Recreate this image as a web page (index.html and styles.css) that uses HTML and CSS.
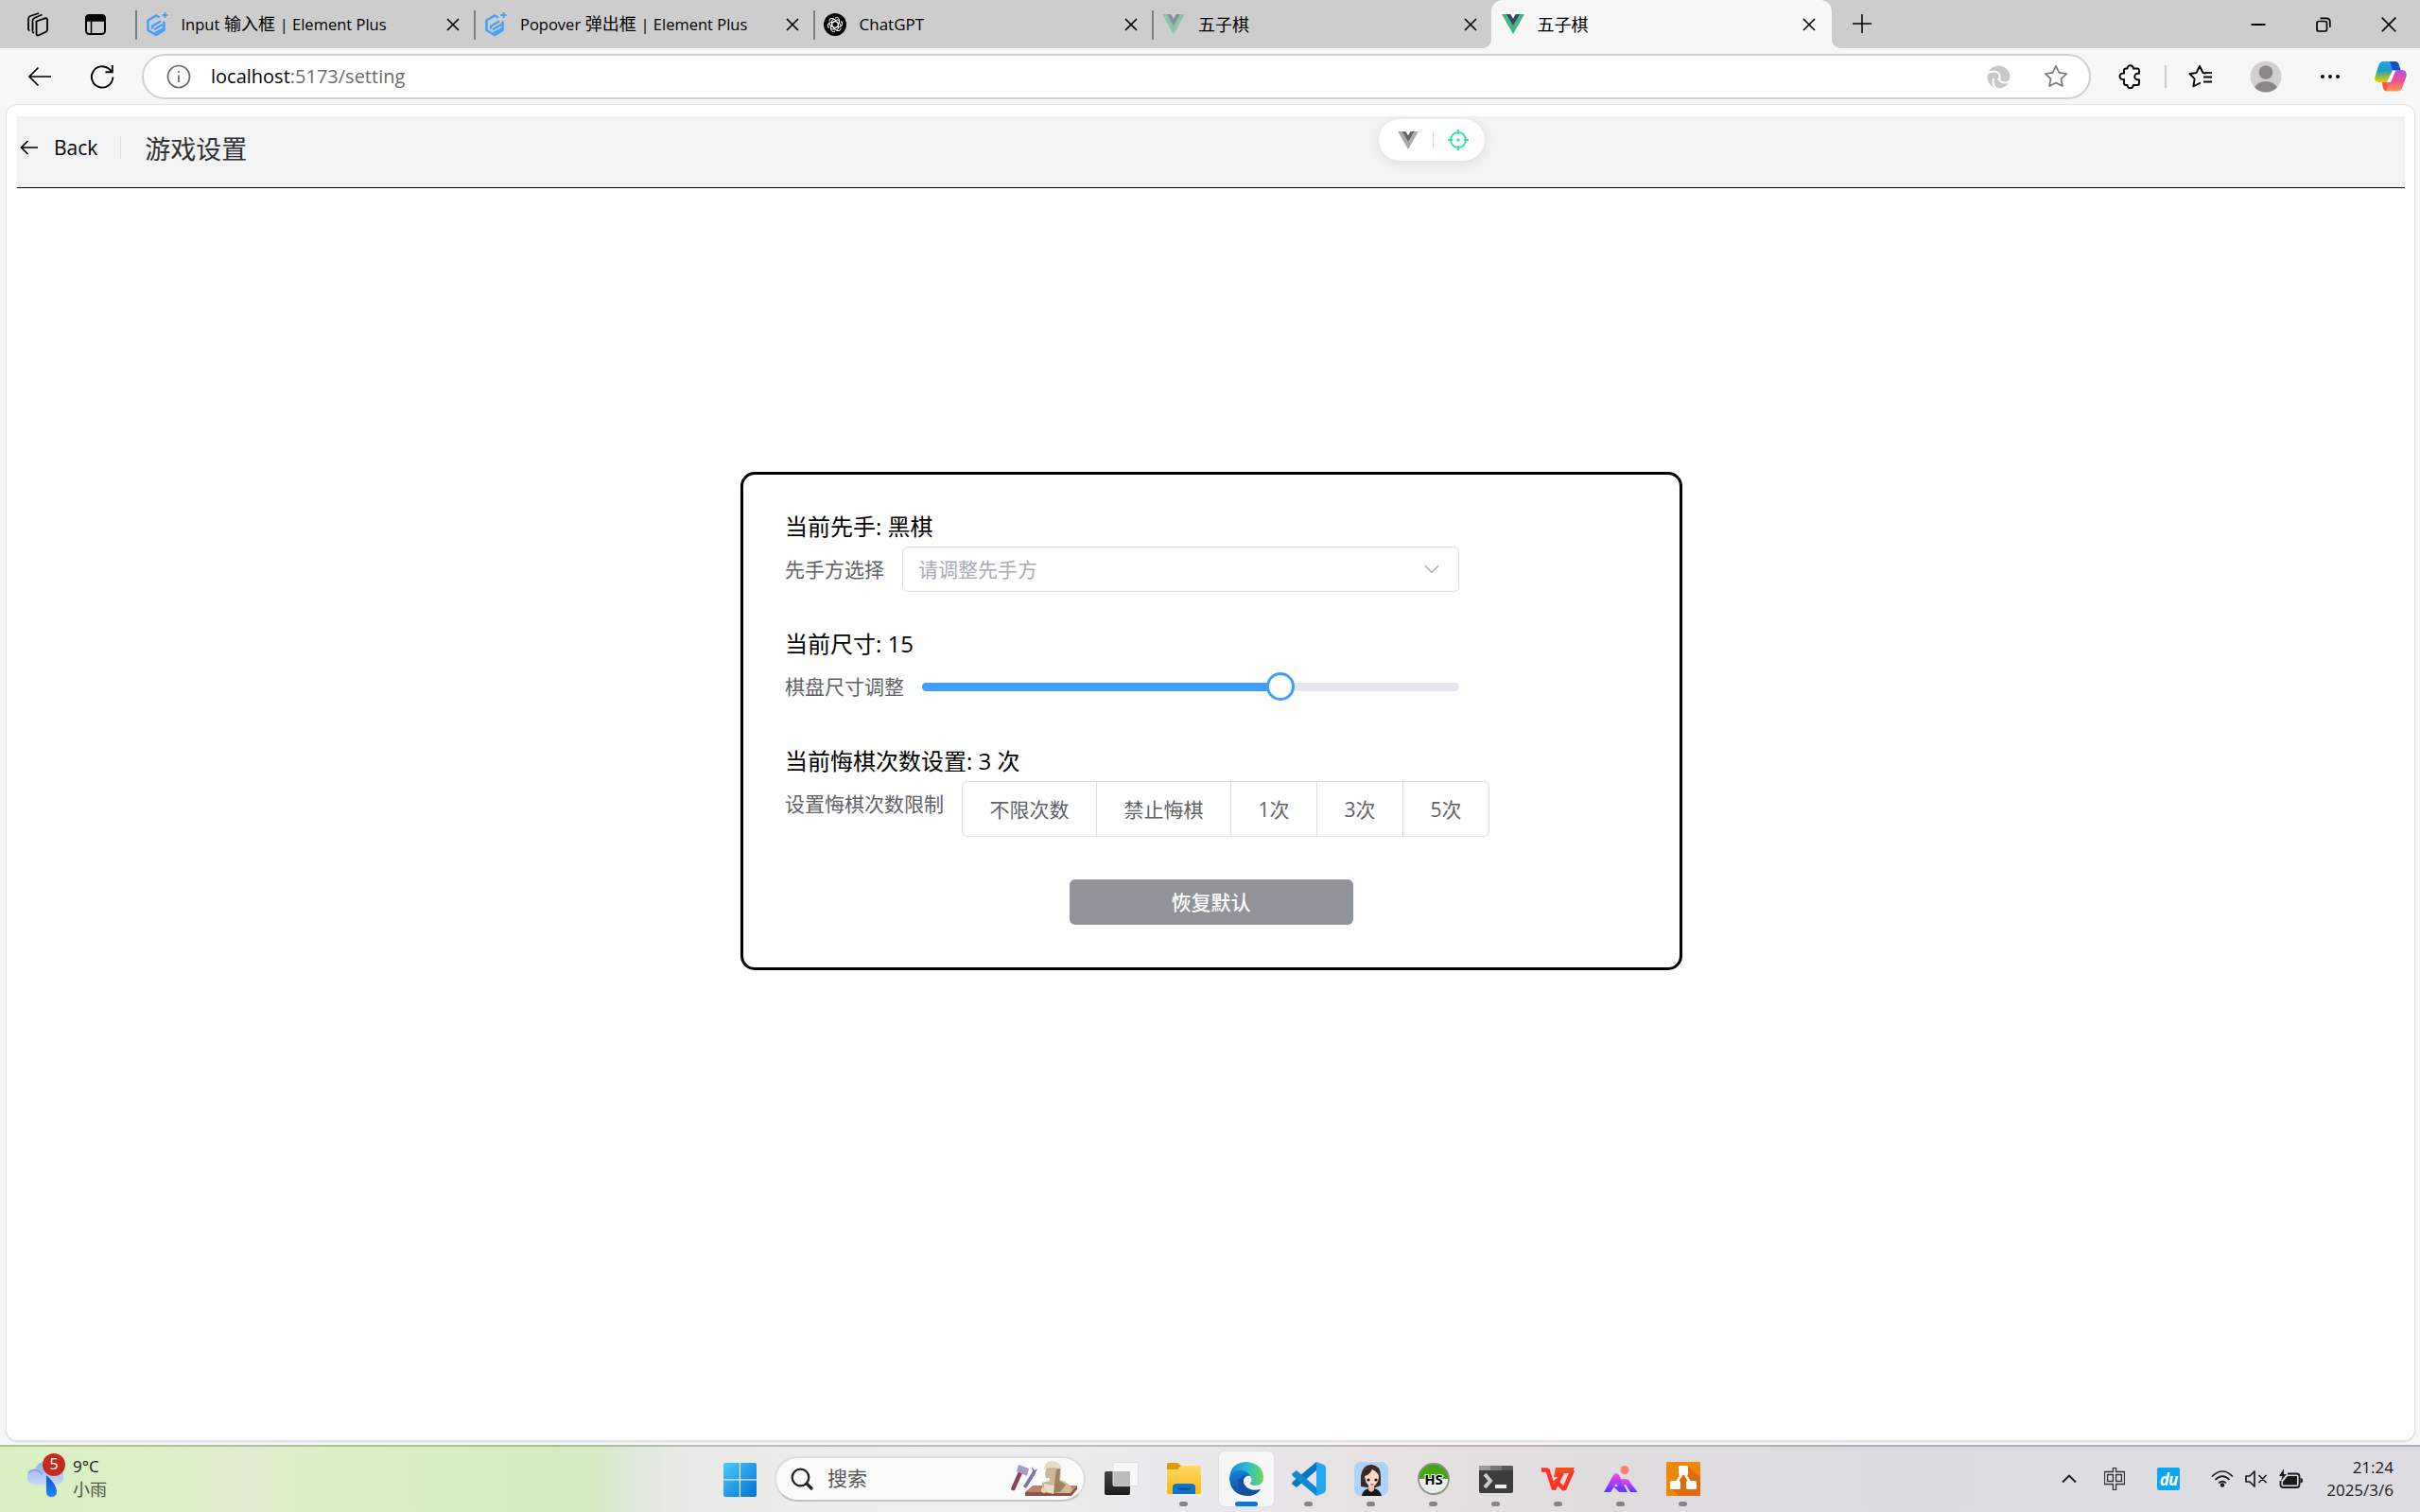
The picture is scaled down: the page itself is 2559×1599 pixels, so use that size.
FILE: index.html
```html
<!DOCTYPE html>
<html lang="zh-CN">
<head>
<meta charset="utf-8">
<title>五子棋</title>
<link rel="stylesheet" href="styles.css">
</head>
<body>
<svg width="0" height="0" class="defs">
  <defs>
    <symbol id="close" viewBox="0 0 14 14"><path d="M1 1l12 12M13 1L1 13" fill="none" stroke="#000" stroke-width="1.7"/></symbol>
    <symbol id="element" viewBox="0 0 24 26"><g fill="none" stroke="#409eff" stroke-width="2.4" stroke-linejoin="round"><path d="M15 5.500L11 3.500 2.500 8.500v10.500l8.500 5 8.500-5V9.500"/></g><g fill="none" stroke="#409eff" stroke-width="2.200"><path d="M16 9.500l-9 5.200v2.800M18 13l-9 5.200M18.500 17.500L10 22"/></g><path d="M20.500 0v6M17.500 3h6" stroke="#409eff" stroke-width="1.8"/></symbol>
    <symbol id="vue" viewBox="0 0 24 21"><path fill="#41b883" d="M0 0h4.800L12 12.400 19.200 0H24L12 21z"/><path fill="#35495e" d="M4.800 0h4.500L12 4.700 14.700 0h4.500L12 12.400z"/></symbol>
    <symbol id="vuegray" viewBox="0 0 24 21"><path fill="#aaa" d="M0 0h4.800L12 12.400 19.200 0H24L12 21z"/><path fill="#646464" d="M4.800 0h4.500L12 4.700 14.700 0h4.500L12 12.400z"/></symbol>
    <linearGradient id="gwin" x1="0" y1="0" x2="1" y2="1"><stop offset="0" stop-color="#4ccbff"/><stop offset="1" stop-color="#0070cf"/></linearGradient>
    <linearGradient id="gedge" x1="0" y1="0" x2="1" y2="0"><stop offset="0" stop-color="#1b86cf"/><stop offset=".5" stop-color="#2bbbd4"/><stop offset="1" stop-color="#6ad955"/></linearGradient>
    <linearGradient id="gedge2" x1="0" y1="0" x2="0" y2="1"><stop offset="0" stop-color="#1580d3"/><stop offset="1" stop-color="#0f4c9c"/></linearGradient>
    <linearGradient id="gfold" x1="0" y1="0" x2="0" y2="1"><stop offset="0" stop-color="#ffd866"/><stop offset="1" stop-color="#fbb914"/></linearGradient>
    <linearGradient id="gai" x1="0" y1="0" x2="0" y2="1"><stop offset="0" stop-color="#f04fd6"/><stop offset=".6" stop-color="#9a3cff"/><stop offset="1" stop-color="#4b3bff"/></linearGradient>
    <linearGradient id="gcloud" x1="0" y1="0" x2="0" y2="1"><stop offset="0" stop-color="#8eb0f0"/><stop offset="1" stop-color="#c9d9f8"/></linearGradient>
    <linearGradient id="gdrop" x1="0" y1="0" x2="0" y2="1"><stop offset="0" stop-color="#0d53dc"/><stop offset="1" stop-color="#1d85ff"/></linearGradient>
    <linearGradient id="gcop1" x1="0" y1="0" x2="0" y2="1"><stop offset="0" stop-color="#1aa5ee"/><stop offset=".45" stop-color="#2a9bc5"/><stop offset=".75" stop-color="#8cc63f"/><stop offset="1" stop-color="#ffc800"/></linearGradient>
    <linearGradient id="gcop2" x1="0" y1="0" x2="0" y2="1"><stop offset="0" stop-color="#a855ee"/><stop offset=".5" stop-color="#ee4f93"/><stop offset="1" stop-color="#ff9a4a"/></linearGradient>
    <linearGradient id="gtv" x1="0" y1="0" x2="0" y2="1"><stop offset="0" stop-color="#444"/><stop offset="1" stop-color="#1c1c1c"/></linearGradient>
  </defs>
</svg>

<div class="window">
  <div class="tabstrip">
    <div class="strip-tools">
      <svg width="26" height="26" viewBox="0 0 26 26" fill="none" stroke="#000" stroke-width="1.800" stroke-linejoin="round"><path d="M12.500 9.500l9-3.200q2.500-.6 2.500 1.700v10.500q0 1.500-1.500 2.200l-7.500 3.500q-2.500 1-2.500-1.500z"/><path d="M8.500 20V9q0-2 2-3l8-3.500M4 17.500V7q0-2 2-3l9-3M8.500 20q0 1.500 1.500 2M4 17.500q0 1.500 1.500 2"/></svg>
      <svg width="22" height="22" viewBox="0 0 22 22"><rect x="1" y="1" width="20" height="20" rx="3.500" fill="none" stroke="#000" stroke-width="2"/><path d="M1 7V4q0-3 3-3h14q3 0 3 3v3zM6.500 7v14" stroke="#000" stroke-width="1.500"/></svg>
    </div>
    <div class="tab"><svg class="fav" width="24" height="26"><use href="#element"/></svg><span class="title"><span class="lat">Input</span> 输入框 <span class="lat">| Element Plus</span></span><svg class="x" width="14" height="14"><use href="#close"/></svg></div>
    <div class="tab"><svg class="fav" width="24" height="26"><use href="#element"/></svg><span class="title"><span class="lat">Popover</span> 弹出框 <span class="lat">| Element Plus</span></span><svg class="x" width="14" height="14"><use href="#close"/></svg></div>
    <div class="tab"><svg class="fav" width="24" height="24" viewBox="0 0 24 24"><circle cx="12" cy="12" r="12"/><g fill="none" stroke="#fff" stroke-width="1"><g id="petal"><path d="M12 8.500l3.500 2V15q0 2.500-2.500 3"/><path d="M12 5q3.500-1.500 4.500 2v3.500"/></g><use href="#petal" transform="rotate(60 12 12)"/><use href="#petal" transform="rotate(120 12 12)"/><use href="#petal" transform="rotate(180 12 12)"/><use href="#petal" transform="rotate(240 12 12)"/><use href="#petal" transform="rotate(300 12 12)"/></g></svg><span class="title"><span class="lat gpt">ChatGPT</span></span><svg class="x" width="14" height="14"><use href="#close"/></svg></div>
    <div class="tab"><svg class="fav faded" width="24" height="21"><use href="#vue"/></svg><span class="title">五子棋</span><svg class="x" width="14" height="14"><use href="#close"/></svg></div>
    <div class="tab active"><svg class="fav" width="24" height="21"><use href="#vue"/></svg><span class="title">五子棋</span><svg class="x" width="14" height="14"><use href="#close"/></svg></div>
    <svg class="newtab" width="20" height="20" viewBox="0 0 20 20"><path d="M10 0v20M0 10h20" stroke="#000" stroke-width="1.500"/></svg>
    <div class="winbtns">
      <svg width="16" height="16" viewBox="0 0 16 16"><path d="M.5 8h15" stroke="#000" stroke-width="2"/></svg>
      <svg width="16" height="16" viewBox="0 0 16 16" fill="none" stroke="#000" stroke-width="1.700"><rect x="1" y="4.500" width="10.500" height="10.500" rx="2"/><path d="M4.500 1.300H11q3.800 0 3.800 3.800V11"/></svg>
      <svg width="16" height="16" viewBox="0 0 16 16"><path d="M.7.700l14.600 14.600M15.300.700L.7 15.300" stroke="#000" stroke-width="1.700"/></svg>
    </div>
  </div>

  <div class="toolbar">
    <div class="nav">
      <svg width="26" height="22" viewBox="0 0 26 22" fill="none" stroke="#000" stroke-width="1.700"><path d="M25 11H2M11.500 1.500L2 11l9.500 9.500"/></svg>
      <svg width="26" height="26" viewBox="0 0 26 26" fill="none" stroke="#000" stroke-width="1.900"><path d="M24.300 13.500A11.200 11.200 0 1 1 20.500 5l3 3M23.800 1v7.300h-7.300"/></svg>
    </div>
    <div class="address">
      <svg width="26" height="26" viewBox="0 0 26 26" fill="none" stroke="#666" stroke-width="1.700"><circle cx="13" cy="13" r="11.500"/><path d="M13 11.500V19M13 7v2"/></svg>
      <span class="url">localhost<span class="path">:5173/setting</span></span>
      <svg class="read" width="25" height="25" viewBox="0 0 25 25"><circle cx="12.500" cy="12.500" r="12" fill="#c8c8c8"/><path d="M0 9Q7 4.500 12 8q4 4-.5 7.500M12 26q-7-4-5-12M26 14q-4 6-10 4-3.500-2-2.500-6" fill="none" stroke="#fff" stroke-width="2"/></svg>
      <svg width="26" height="26" viewBox="0 0 26 26" fill="none" stroke="#767676" stroke-width="1.700" stroke-linejoin="round"><path d="M13 1.800l3.400 7.100 7.800 1.100-5.700 5.400 1.400 7.700-6.900-3.700-6.900 3.700 1.400-7.700L1.800 10l7.800-1.100z"/></svg>
    </div>
    <div class="tools">
      <svg width="26" height="26" viewBox="0 0 26 26" fill="none" stroke="#000" stroke-width="1.900" stroke-linejoin="round"><path d="M9.500 4.500a3.200 3.200 0 0 1 6.400 0H20q2 0 2 2v3.200h-1.500a3.300 3.300 0 0 0 0 6.600H22V20q0 2-2 2h-4.100a3.200 3.200 0 0 1-6.400 0H8q-2 0-2-2v-4H4.700a3.200 3.200 0 0 1 0-6.400H6V6.500q0-2 2-2z"/></svg>
      <i class="tooldiv"></i>
      <svg width="26" height="26" viewBox="0 0 26 26" fill="none" stroke="#000" stroke-width="1.900" stroke-linejoin="round"><path d="M18.500 9.500l-3-.5L12 1.800 8.600 9 1.500 10l5.200 5.300-1.400 8L13 19.500M16 13.500h9M16 8.500M16 18.500h9"/><path d="M18 9h7" stroke-width="1.700"/></svg>
      <svg width="34" height="34" viewBox="0 0 34 34"><circle cx="17" cy="17" r="16.500" fill="#d2d0ce"/><circle cx="17" cy="12.500" r="7.300" fill="#8a8886"/><path d="M5 28.300Q9 22 17 22t12 6.300Q24 33.500 17 33.500t-12-5.200z" fill="#8a8886"/></svg>
      <svg width="22" height="6" viewBox="0 0 22 6"><circle cx="3" cy="3" r="2"/><circle cx="11" cy="3" r="2"/><circle cx="19" cy="3" r="2"/></svg>
      <svg width="34" height="32" viewBox="0 0 34 32"><path d="M9 0h13l-7 22H5Q-1 22 .5 16L4 5Q5.500 0 9 0z" fill="url(#gcop1)"/><path d="M16 0h6q3 0 4 4l1.500 5H19z" fill="#1750c8"/><path d="M25 9h4q6 1 4.500 7L30 26q-1.500 5.500-6 5.500H12L18.500 9z" fill="url(#gcop2)"/><path d="M8 22h7l-2.500 9.500q-3-.5-4-5z" fill="#f25a3c"/><path d="M19 9.500h3.500L17 22h-4z" fill="#fff"/></svg>
    </div>
  </div>

  <main class="page">
    <header class="page-header">
      <svg width="20" height="16" viewBox="0 0 20 16" fill="none" stroke="#000" stroke-width="1.700"><path d="M19 8H1.500M8.500 1l-7 7 7 7"/></svg>
      <span class="back">Back</span>
      <i class="vdiv"></i>
      <span class="ptitle">游戏设置</span>
    </header>
    <div class="devtools">
      <svg width="22" height="19"><use href="#vuegray"/></svg>
      <i></i>
      <svg width="22" height="22" viewBox="0 0 22 22" fill="none" stroke="#31e6a0" stroke-width="2"><circle cx="11" cy="11" r="8"/><path d="M11 0v5M11 17v5M0 11h5M17 11h5"/><circle cx="11" cy="11" r="1.700" fill="#31e6a0" stroke="none"/></svg>
    </div>
    <section class="card">
      <h2>当前先手: 黑棋</h2>
      <div class="row">
        <label>先手方选择</label>
        <div class="select"><span>请调整先手方</span><svg width="16" height="10" viewBox="0 0 16 10"><path d="M.7 1L8 8.300 15.300 1" fill="none" stroke="#a8abb2" stroke-width="1.300"/></svg></div>
      </div>
      <h2>当前尺寸: 15</h2>
      <div class="row">
        <label>棋盘尺寸调整</label>
        <div class="slider"><div class="bar" style="width:66.67%"></div><div class="knob" style="left:66.67%"></div></div>
      </div>
      <h2>当前悔棋次数设置: 3 次</h2>
      <div class="row last">
        <label>设置悔棋次数限制</label>
        <div class="group"><span class="wide">不限次数</span><span class="wide">禁止悔棋</span><span>1次</span><span>3次</span><span>5次</span></div>
      </div>
      <div class="reset">恢复默认</div>
    </section>
  </main>
</div>

<footer class="taskbar">
  <div class="weather">
    <div class="wicon">
      <svg width="38" height="48" viewBox="0 0 38 48"><path d="M8.500 34.500h21a8.500 8.500 0 0 0 1-17A12 12 0 0 0 8 17.500a8.500 8.500 0 0 0 .5 17z" fill="url(#gcloud)"/><path d="M1 22a8.500 8.500 0 0 1 14.500 1.500" fill="none" stroke="#7d9de6" stroke-width="1.500"/><path d="M20 24q11 10 11 17 0 6-5.500 6T20 41z" fill="url(#gdrop)"/></svg>
      <b>5</b>
    </div>
    <div class="wtext"><span class="deg">9°C</span><span class="cond">小雨</span></div>
  </div>
  <div class="apps">
    <svg class="start" width="35" height="36" viewBox="0 0 35 36"><path d="M2 0h14.800v17.300H0V2q0-2 2-2zM18 0h15q2 0 2 2v15.300H18zM0 18.600h16.800V36H2q-2 0-2-2zM18 18.600h17V34q0 2-2 2H18z" fill="url(#gwin)"/></svg>
    <div class="search">
      <svg width="24" height="24" viewBox="0 0 24 24" fill="none" stroke="#222" stroke-linecap="round"><circle cx="10.500" cy="10.500" r="8.800" stroke-width="2.300"/><path d="M17 17l5 5" stroke-width="3.200"/></svg>
      <span>搜索</span>
      <svg class="art" width="70" height="38" viewBox="0 0 70 38"><path d="M23 26h47l-7 7H15z" fill="#bf8269"/><path d="M15 33h48l7-7v4l-6 7H15z" fill="#8e5544"/><path d="M0 29L9 9l4 2L4 31q-4 1-4-2z" fill="#89405e"/><path d="M8 4l11 4-2 8L6 11z" fill="#a79bc6"/><path d="M13 27L23 11l-1-5 3 4 3-2-3 7-9 14z" fill="#7875a8"/><path d="M37 10q-1-8 6-9 8-1 10 6l-1 13q8 2 13 10 0 4-4 4H40l-7-2V23l8-2v-3h-4l-1-4z" fill="#cbb696"/><path d="M35 9q0-8 8-9 7 0 10 6v3q-9-4-18 0z" fill="#e5dac5"/><path d="M48 9l4-1-1 13 7 4-6 8-10 1 4-9z" fill="#9b8160"/><path d="M35 24l11 2-1 9-10-3z" fill="#eadfcb"/><circle cx="35" cy="31" r="3" fill="#e5d3b2"/><circle cx="60" cy="30" r="4" fill="#d4bc95"/></svg>
    </div>
    <div class="app"><svg width="36" height="36" viewBox="0 0 36 36"><rect y="10" width="27" height="25" rx="2" fill="url(#gtv)"/><rect x="9" y=".5" width="26.500" height="25" rx="1.500" fill="#f8f8f8" stroke="#ddd"/><path d="M9.500 10H27v15.500H9.500z" fill="#bcbcbc"/></svg></div>
    <div class="app run"><svg width="36" height="36" viewBox="0 0 36 36"><path d="M0 3q0-2 2-2h9l4 3v6H0z" fill="#dc9c00"/><path d="M0 8h11l4-4h19q2 0 2 2v26q0 2-2 2H2q-2 0-2-2z" fill="url(#gfold)"/><path d="M6 34V27q0-4 4-4h16q4 0 4 4v7z" fill="#0a75cd"/><path d="M11 28.500h14" stroke="#0c4a94" stroke-width="2"/></svg></div>
    <div class="app run current"><svg width="36" height="36" viewBox="0 0 36 36"><path d="M0 18Q1 0 19 0q16 2 17 16 0 9-9 9-6 0-5-3 3-3 0-7-6-7-15-3-6 2-7 6z" fill="url(#gedge)"/><path d="M0 17Q4 8 13 9q7 1 9 6-4-1-7 3-4 8 5 13 6 2 13-2-5 7-14 7Q1 35 0 17z" fill="url(#gedge2)"/><path d="M11 18q3-4 7-4-5 5-2 10 5 8 17 5-5 7-14 7-11-3-10-18z" fill="#124f9f"/></svg></div>
    <div class="app run"><svg width="36" height="36" viewBox="0 0 36 36"><path d="M26 0v9L5 27l-4-3q-2-1 0-3z" fill="#0077c2"/><path d="M26 36v-9L5 9l-4 3q-2 1 0 3z" fill="#1389d4"/><path d="M26 0l8 3q2 1 2 3v24q0 2-2 3l-8 3z" fill="#25a5f3"/></svg></div>
    <div class="app run"><svg width="36" height="36" viewBox="0 0 36 36"><rect width="36" height="36" rx="7" fill="#add3fa"/><path d="M7 26V15Q9 2 19 3q9 1 9 12v10l-8 3z" fill="#392b28"/><path d="M8 36q1-7 8-8h5q6 1 8 8z" fill="#171719"/><path d="M15 25h6v5l-3 2-3-2z" fill="#e9bda9"/><path d="M11 15q5-1 8-7 6 3 7 7 0 8-7 12-7-2-8-12z" fill="#fad9ca"/><circle cx="15" cy="19" r="1.600" fill="#231815"/><circle cx="23" cy="19" r="1.600" fill="#231815"/><path d="M17.500 24h3" stroke="#c75455" stroke-width="1.500"/></svg></div>
    <div class="app run"><svg width="36" height="36" viewBox="0 0 36 36"><circle cx="18" cy="18" r="16" fill="#ecefeb"/><path d="M2 18a16 16 0 0 1 32 0z" fill="#43a612"/><circle cx="18" cy="18" r="16" fill="none" stroke="#84947c" stroke-width="1.800"/><text x="18" y="23.500" text-anchor="middle" font-family="Open Sans,sans-serif" font-weight="700" font-size="15" stroke="#fff" stroke-width="2" paint-order="stroke">HS</text></svg></div>
    <div class="app run"><svg width="36" height="36" viewBox="0 0 36 36"><rect y="4" width="36" height="29" rx="2" fill="#3d3d3d"/><path d="M0 9V6q0-2 2-2h10v5z" fill="#999"/><path d="M12 4h12v5H12z" fill="#777"/><path d="M24 4h10q2 0 2 2v3H24z" fill="#595959"/><path d="M6 13l6 7-6 7" fill="none" stroke="#ccc" stroke-width="4"/><path d="M17 24h12v4H17z" fill="#eee"/></svg></div>
    <div class="app run"><svg width="36" height="36" viewBox="0 0 36 36"><g fill="none" stroke="#fb3527" stroke-width="4.500" stroke-linejoin="bevel"><path d="M0 8.500h6.500L13 29l9-18"/><path d="M14 19l10 10L33 8.500"/></g><path d="M15 6h20l-3 6H20l-2 4h-5z" fill="#f84a1c"/></svg></div>
    <div class="app run"><svg width="36" height="36" viewBox="0 0 36 36"><path d="M0 32L10 14q3-4 6 0l9 18h-7l-5-9-6 9z" fill="url(#gai)"/><path d="M10 26h8l5 6h-7z" fill="#713cf9"/><path d="M17 19q3-2 9 0l9.500 13H28l-5-8h-4z" fill="url(#gai)"/><circle cx="22" cy="8.500" r="4.500" fill="#fb8073"/></svg></div>
    <div class="app run"><svg width="36" height="36" viewBox="0 0 36 36"><rect width="36" height="36" rx="1.500" fill="#f08705"/><path d="M22 4l14 12v20H13l-8-8 12-12z" fill="#df6c0c"/><path d="M18 10L9 25M18 10l9 15" stroke="#fff" stroke-width="2.500"/><g fill="#fff"><rect x="13" y="4" width="10" height="10" rx="1.500"/><rect x="4" y="20" width="11" height="9" rx="1.500"/><rect x="21" y="20" width="11" height="9" rx="1.500"/></g></svg></div>
  </div>
  <div class="tray">
    <svg width="16" height="10" viewBox="0 0 16 10"><path d="M1 8.500l7-7 7 7" fill="none" stroke="#1a1a1a" stroke-width="1.900"/></svg>
    <svg width="22" height="24" viewBox="0 0 22 24" fill="none"><path d="M2 6h18v10H2zM11 0v24" stroke="#333" stroke-width="4.500"/><path d="M2 6h18v10H2zM11 1v22" stroke="#e9e9ec" stroke-width="1.700"/></svg>
    <span class="du">du</span>
    <svg width="24" height="18" viewBox="0 0 24 18" fill="none" stroke="#1a1a1a" stroke-width="1.700"><path d="M1 6.500q11-11 22 0M4.500 10q7.500-7.500 15 0M8 13.500q4-4 8 0"/><circle cx="12" cy="15.500" r="1.400" fill="#1a1a1a"/></svg>
    <svg width="24" height="18" viewBox="0 0 24 18" fill="none" stroke="#1a1a1a" stroke-width="1.700"><path d="M1 6h4l5-5v16l-5-5H1zM14.500 5l8 8M22.500 5l-8 8" stroke-linejoin="round"/></svg>
    <svg width="25" height="20" viewBox="0 0 25 20"><path d="M9 4.500h9.500q3 0 3 3V16q0 3-3 3h-14q-3 0-3-3v-4" fill="none" stroke="#1a1a1a" stroke-width="1.800"/><path d="M9 7h10v9.500H4V13z" fill="#1a1a1a"/><path d="M22.500 9q2.500 0 2.500 2.700t-2.500 2.700zM5 0h-.500L0 7h3.500L2 12l6-7H5z" fill="#1a1a1a"/></svg>
    <div class="clock"><span>21:24</span><span>2025/3/6</span></div>
  </div>
</footer>
</body>
</html>
```
FILE: styles.css
```css
* { box-sizing: border-box; }
body { margin: 0; width: 2559px; height: 1599px; overflow: hidden; display: flex; flex-direction: column; background: #f7f7f7; font-family: "Open Sans", "Noto Sans CJK SC", sans-serif; color: #000; }
svg { display: block; flex: none; }
.defs { position: absolute; }
.window { height: 1528px; display: flex; flex-direction: column; }

/* browser tabs */
.tabstrip { height: 51px; flex: none; background: #cdcdcd; display: flex; }
.strip-tools { width: 142.500px; display: flex; align-items: center; gap: 38px; padding-left: 26px; }
.tab { width: 358.500px; height: 51px; display: flex; align-items: center; padding: 0 15px 0 11px; position: relative; }
.tab:not(.active)::before { content: ""; position: absolute; left: 0; top: 11px; width: 2px; height: 31px; background: #7d7d7d; }
.tab .fav { margin-right: 14px; }
.tab .x { margin-left: auto; }
.faded { opacity: .45; }
.title { font-size: 18px; line-height: 24px; white-space: nowrap; }
.lat { font-size: 16.500px; }
.gpt { font-size: 17px; }
.active { background: #f7f7f7; border-radius: 12px 12px 0 0; width: 360px; padding-right: 17px; }
.active::before, .active::after { content: ""; position: absolute; bottom: 0; width: 9px; height: 9px; }
.active::before { left: -9px; background: radial-gradient(circle at 0 0, #cdcdcd 8.500px, #f7f7f7 9px); }
.active::after { right: -9px; background: radial-gradient(circle at 100% 0, #cdcdcd 8.500px, #f7f7f7 9px); }
.newtab { margin: 15px 0 0 22px; }
.winbtns { margin-left: auto; display: flex; align-items: center; gap: 53px; padding-right: 25px; }

/* navigation bar */
.toolbar { height: 59px; flex: none; display: flex; align-items: flex-start; padding-top: 6px; }
.nav { width: 150px; height: 48px; display: flex; align-items: center; gap: 40px; padding-left: 29px; }
.address { width: 2061px; height: 48px; border: 2px solid #d1d1d1; border-radius: 24px; background: #fff; display: flex; align-items: center; padding: 0 22px 0 24px; }
.url { margin-left: 21px; font-size: 20px; line-height: 28px; }
.path { color: #6b6b6b; }
.read { margin-left: auto; margin-right: 35px; }
.tools { height: 48px; display: flex; align-items: center; padding-left: 29px; }
.tooldiv { width: 2px; height: 24px; background: #ccc; margin: 0 23px 0 23px; }
.tools svg:nth-of-type(3) { margin-left: 39px; }
.tools svg:nth-of-type(4) { margin-left: 40px; }
.tools svg:nth-of-type(5) { margin-left: 36px; }

/* page */
.page { flex: none; width: 2548px; height: 1414px; margin-left: 6px; background: #fff; border: 1px solid #e4e4e4; border-radius: 12px; padding: 12px 10px 0 11px; box-shadow: 0 1px 2px rgba(0,0,0,.12); position: relative; }
.page-header { height: 76px; background: #f3f3f3; border-bottom: 1px solid #000; display: flex; align-items: center; padding: 0 0 9px 3px; }
.back { font-size: 21px; line-height: 28px; margin-left: 16px; font-weight: 500; }
.vdiv { width: 1px; height: 24px; background: #dcdfe6; margin: 0 25px 0 24px; }
.ptitle { font-size: 27px; line-height: 36px; color: #303133; padding-top: 4px; }
.devtools { position: absolute; left: 1451px; top: 15px; width: 112px; height: 44px; border-radius: 22px; background: #fff; box-shadow: 0 2px 12px rgba(0,0,0,.1); display: flex; align-items: center; padding-left: 20px; }
.devtools i { width: 1px; height: 16px; background: #ddd; margin: 0 15px; }
.card { width: 996px; height: 527px; margin: 300px 0 0 765px; border: 3px solid #000; border-radius: 15px; padding: 38px 45px 0 44px; }
h2 { margin: 0; font-size: 24px; font-weight: 400; line-height: 34px; height: 38px; }
.row { display: flex; height: 86px; align-items: flex-start; }
label { font-size: 21px; line-height: 48px; color: #606266; margin-right: 19px; }
.select { width: 589px; height: 48px; border: 1.500px solid #dcdfe6; border-radius: 6px; display: flex; align-items: center; justify-content: space-between; padding: 0 20px 0 16px; font-size: 21px; color: #a8abb2; }
.select span { padding-bottom: 2px; }
.slider { width: 568px; height: 9px; border-radius: 5px; background: #e4e7ed; margin-top: 20px; position: relative; }
.bar { height: 9px; border-radius: 5px 0 0 5px; background: #409eff; }
.knob { position: absolute; top: -11px; width: 30px; height: 30px; margin-left: -15px; border: 3px solid #409eff; border-radius: 50%; background: #fff; }
.group { display: flex; height: 59px; border: 1px solid #dcdfe6; border-radius: 6px; }
.group span { width: 91px; line-height: 58px; text-align: center; font-size: 21px; color: #606266; border-left: 1px solid #dcdfe6; }
.group .wide { width: 142px; }
.group .wide:first-child { width: 141px; border-left: 0; }
.last { height: 104px; }
.reset { width: 300px; height: 48px; margin: 0 auto; border-radius: 6px; background: #909399; color: #fff; font-size: 21px; font-weight: 500; line-height: 48px; text-align: center; }

/* taskbar */
.taskbar { height: 71px; flex: none; border-top: 2px solid rgba(0,0,0,.2); display: flex; background: linear-gradient(90deg, #d8f0bf 0, #dcefc6 190px, #e2ebd0 260px, #d8efc3 345px, #d6efbf 480px, #d3ebc1 625px, #dfe8da 675px, #eaebe9 730px, #eeeeee 1050px, #e8e7ea 1290px, #e6e1e2 1480px, #dfdcde 1700px, #dcdce0 2000px, #dddce2 100%) border-box; }
.weather { width: 765px; display: flex; padding-left: 29px; }
.wicon { position: relative; width: 38px; padding-top: 6px; }
.wicon b { position: absolute; left: 16px; top: 7px; width: 24px; height: 24px; border-radius: 50%; background: #c42b1c; color: #fff; font-size: 16px; font-weight: 400; line-height: 23px; text-align: center; }
.wtext { margin-left: 10px; padding-top: 9px; display: flex; flex-direction: column; color: #1a1a1a; }
.wtext span { line-height: 24px; }
.deg { font-size: 17px; }
.cond { font-size: 18px; color: #4e5848; }
.apps { display: flex; }
.start { margin-top: 17px; }
.search { width: 329px; height: 48px; margin: 10px 4px 0 19px; border: 2px solid #dcdcdc; border-bottom-color: #c4c4c4; border-radius: 24px; background: #fbfbfb; display: flex; align-items: center; padding: 0 7px 0 15px; }
.search span { font-size: 21px; line-height: 30px; margin-left: 15px; padding-bottom: 2px; color: #555; }
.art { margin-left: auto; }
.app { width: 58px; height: 58px; margin: 5px 4px 0; padding: 11px; position: relative; border-radius: 6px; left: .500px; }
.run::after { content: ""; position: absolute; bottom: 0; left: 24.500px; width: 9px; height: 5px; border-radius: 3px; background: #858585; }
.current { background: #f7f7f8; box-shadow: 0 0 0 1px #e0dfe1; }
.current::after { left: 17px; width: 24px; background: #0a78d4; }
.tray { margin-left: auto; display: flex; align-items: center; padding-right: 28px; height: 67px; }
.tray svg { margin-right: 12px; }
.tray svg:nth-of-type(1) { margin-right: 29px; }
.tray svg:nth-of-type(2) { margin-right: 34px; }
.tray svg:nth-of-type(5) { margin-right: 24px; }
.du { width: 24px; height: 24px; margin-right: 33px; border-radius: 2px; background: #0ba5f7; color: #fff; font: italic 700 17px/26px "Open Sans", sans-serif; text-align: center; letter-spacing: -1px; }
.clock { width: 72px; display: flex; flex-direction: column; text-align: right; font-size: 17px; line-height: 24px; color: #1a1a1a; white-space: nowrap; }
```
